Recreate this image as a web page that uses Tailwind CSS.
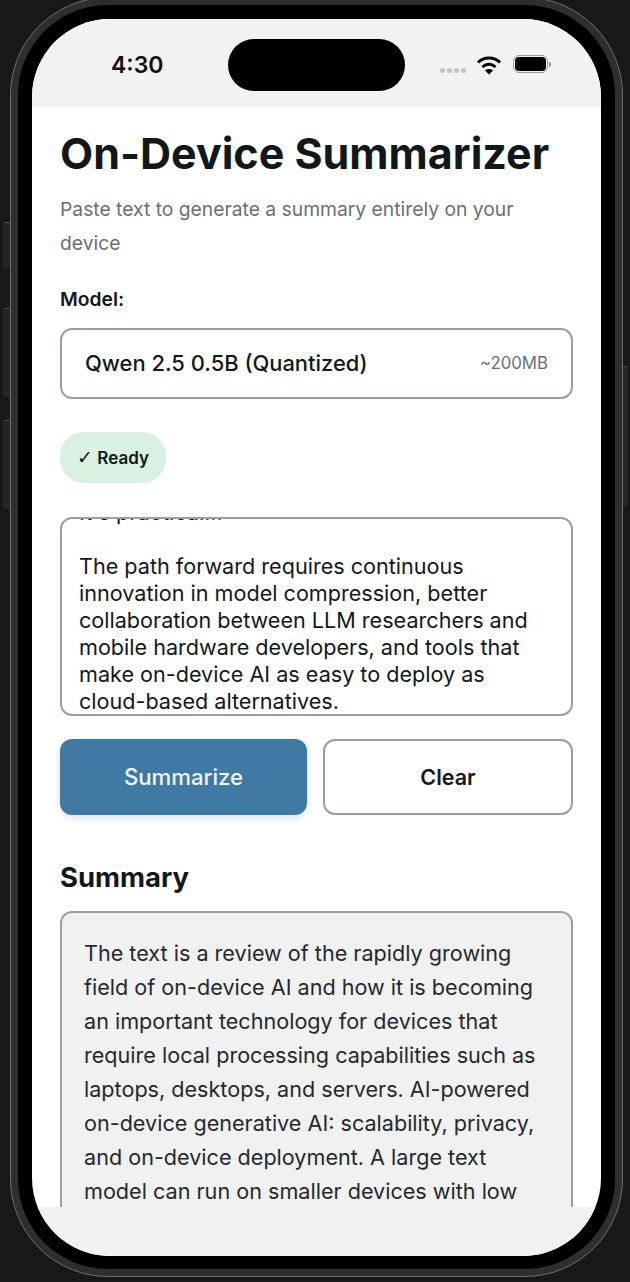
<!DOCTYPE html>
<html>
<head>
<meta charset="utf-8">
<script src="https://cdn.jsdelivr.net/npm/@tailwindcss/browser@4"></script>
</head>
<body class="bg-[#181818] overflow-hidden h-[1282px] w-[630px] font-['Inter',sans-serif]">
<div class="relative h-[1282px] w-[630px] overflow-hidden pl-[10px]">
  <!-- side buttons -->
  <div class="absolute left-[3px] top-[222px] h-[46px] w-[7px] rounded-l-[2px] bg-[#262626] border-t border-[#4a4a4a]"></div>
  <div class="absolute left-[3px] top-[308px] h-[89px] w-[7px] rounded-l-[2px] bg-[#262626] border-t border-[#4a4a4a]"></div>
  <div class="absolute left-[3px] top-[420px] h-[89px] w-[7px] rounded-l-[2px] bg-[#262626] border-t border-[#4a4a4a]"></div>
  <div class="absolute left-[623px] top-[366px] h-[141px] w-[5px] rounded-r-[2px] bg-[#262626] border-t border-[#4a4a4a]"></div>
  <!-- phone -->
  <div class="mt-[-3px] h-[1280px] w-[613px] rounded-[98px] bg-[#2e2e2e] border border-[#6e6e6e] p-[7px]">
    <div class="h-full w-full rounded-[90px] bg-black pt-[14px] pb-[13px] pl-[14px] pr-[14px]">
      <div class="flex h-full w-full flex-col overflow-hidden rounded-[78px] bg-white">
        <!-- status bar -->
        <div class="relative flex h-[88px] shrink-0 items-center bg-[#f2f2f2]">
          <span class="ml-[79px] mt-[4px] text-[23px] font-semibold leading-none text-[#111]">4:30</span>
          <div class="absolute left-[196px] top-[20px] h-[52px] w-[177px] rounded-full bg-black"></div>
          <div class="absolute left-[408px] top-[49px] flex gap-[2px]">
            <span class="size-[5px] rounded-full bg-[#c4c4c4]"></span>
            <span class="size-[5px] rounded-full bg-[#c4c4c4]"></span>
            <span class="size-[5px] rounded-full bg-[#c4c4c4]"></span>
            <span class="size-[5px] rounded-full bg-[#c4c4c4]"></span>
          </div>
          <svg class="absolute left-[444px] top-[36px]" width="26" height="20" viewBox="0 0 26 20" fill="none" stroke="#000" stroke-width="3"><path d="M2 7.5C8 1.5 18 1.5 24 7.5"/><path d="M6.5 12C10.5 8.4 15.5 8.4 19.5 12"/><path d="M13 19.5L9 15.6C11.4 13.6 14.6 13.6 17 15.6Z" fill="#000" stroke="none"/></svg>
          <div class="absolute left-[481px] top-[36px] flex h-[18px] w-[35px] items-center justify-center rounded-[6px] border border-[#9a9a9a]">
            <div class="h-[14px] w-[31px] rounded-[4px] bg-black"></div>
          </div>
          <div class="absolute left-[517px] top-[43px] h-[5px] w-[2px] rounded-r-full bg-[#8a8a8a]"></div>
        </div>
        <!-- content -->
        <div class="min-h-0 flex-1 overflow-hidden px-[28px]">
          <h1 class="mt-[19px] text-[43px] font-bold leading-[54px] text-[#11181c]">On-Device Summarizer</h1>
          <p class="mt-[12px] text-[19.3px] leading-[34px] text-[#687076]">Paste text to generate a summary entirely on your device</p>
          <p class="mt-[22px] text-[19.3px] font-semibold leading-[34px] text-[#11181c]">Model:</p>
          <div class="mt-[12px] flex h-[71px] items-center justify-between rounded-[12px] border-2 border-[#9a9fa4] bg-white pl-[23px] pr-[23px]">
            <span class="text-[21.9px] font-medium text-[#11181c]">Qwen 2.5 0.5B (Quantized)</span>
            <span class="text-[16.8px] text-[#687076]">~200MB</span>
          </div>
          <div class="mt-[33px] flex h-[51px] w-[106px] items-center justify-center rounded-[24px] bg-[#d9f1e0]">
            <span class="text-[17px] font-semibold leading-none text-[#11181c]"><span class="text-[19px] font-normal font-['DejaVu_Sans']">✓</span> Ready</span>
          </div>
          <div class="mt-[34px] h-[199px] overflow-hidden rounded-[12px] border-2 border-[#9a9fa4] px-[17px]">
            <div class="mt-[-20px] text-[21.6px] leading-[27px] text-[#11181c]">
              <p>It's practical...</p>
              <p class="mt-[27px]">The path forward requires continuous innovation in model compression, better collaboration between LLM researchers and mobile hardware developers, and tools that make on-device AI as easy to deploy as cloud-based alternatives.</p>
            </div>
          </div>
          <div class="mt-[23px] flex gap-[16px]">
            <div class="flex h-[76px] w-[247px] items-center justify-center rounded-[12px] bg-[#3e7aa3] shadow-[0_3px_8px_rgba(0,0,0,0.12)]">
              <span class="text-[22.2px] font-medium text-[#f2f7fa]">Summarize</span>
            </div>
            <div class="flex h-[76px] flex-1 items-center justify-center rounded-[12px] border-2 border-[#9a9fa4] bg-white">
              <span class="text-[21.5px] font-semibold text-[#11181c]">Clear</span>
            </div>
          </div>
          <h2 class="mt-[44px] text-[27.4px] font-bold leading-[36px] text-[#11181c]">Summary</h2>
          <div class="mt-[16px] h-[400px] rounded-[12px] border-2 border-[#9a9fa4] bg-[#f1f1f1] px-[22px] pt-[23px]">
            <p class="text-[21.6px] leading-[34px] text-[#24292d]">The text is a review of the rapidly growing field of on-device AI and how it is becoming an important technology for devices that require local processing capabilities such as laptops, desktops, and servers. AI-powered on-device generative AI: scalability, privacy, and on-device deployment. A large text model can run on smaller devices with low</p>
          </div>
        </div>
        <div class="h-[49px] shrink-0 bg-[#f2f2f2]"></div>
      </div>
    </div>
  </div>
</div>
</body>
</html>
